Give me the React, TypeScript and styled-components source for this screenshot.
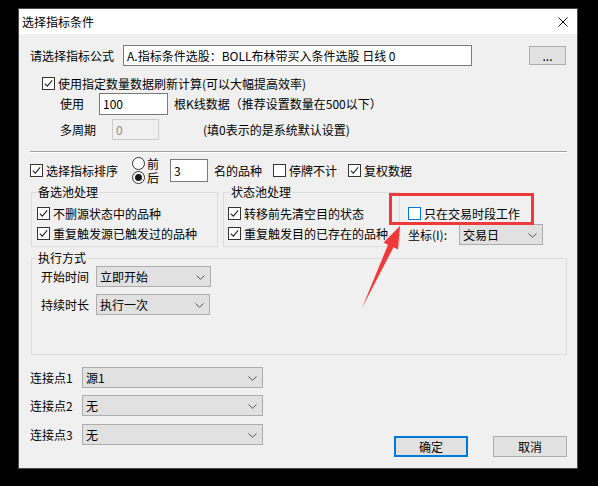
import React from 'react';
import styled, { createGlobalStyle } from 'styled-components';

const Global = createGlobalStyle`
  html, body { margin: 0; padding: 0; background: #000; }
  body {
    font-family: "Noto Sans CJK SC", "Microsoft YaHei", sans-serif;
    font-size: 12px;
    line-height: 16px;
    color: #000;
  }
  #root { width: 598px; height: 486px; overflow: hidden; padding-top: 8px; box-sizing: border-box; }
`;

const Dialog = styled.div`
  position: relative;
  margin-left: 18px;
  width: 560px;
  height: 461px;
  box-sizing: border-box;
  border: 1px solid #4a4a4a;
  background: #f0f0f0;
  display: flex;
  flex-direction: column;
`;

const TitleBar = styled.div`
  height: 25px;
  background: #fff;
  display: flex;
  align-items: center;
  justify-content: space-between;
  padding: 0 9px 0 3px;
  flex-shrink: 0;
`;

const Title = styled.span`
  font-size: 12px;
`;

const Content = styled.div`
  display: flex;
  flex-direction: column;
  padding: 0 10px 0 11px;
`;

const Row = styled.div<{ $mt?: number; $ml?: number; $h?: number }>`
  display: flex;
  align-items: center;
  margin-top: ${p => p.$mt ?? 0}px;
  margin-left: ${p => p.$ml ?? 0}px;
  height: ${p => (p.$h ? `${p.$h}px` : 'auto')};
  flex-shrink: 0;
`;

const Label = styled.span<{ $w?: number; $ml?: number }>`
  display: inline-block;
  width: ${p => (p.$w ? `${p.$w}px` : 'auto')};
  margin-left: ${p => p.$ml ?? 0}px;
  white-space: nowrap;
  flex-shrink: 0;
`;

const TextBox = styled.div<{ $w: number; $h: number; $disabled?: boolean; $ml?: number }>`
  width: ${p => p.$w}px;
  height: ${p => p.$h}px;
  margin-left: ${p => p.$ml ?? 0}px;
  box-sizing: border-box;
  border: 1px solid ${p => (p.$disabled ? '#cccccc' : '#7a7a7a')};
  background: ${p => (p.$disabled ? '#f0f0f0' : '#fff')};
  color: ${p => (p.$disabled ? '#8a8a8a' : '#000')};
  padding-left: 3px;
  display: flex;
  align-items: center;
  white-space: nowrap;
  overflow: hidden;
  flex-shrink: 0;
`;

const PushButton = styled.div<{ $w: number; $h: number; $primary?: boolean; $ml?: number }>`
  width: ${p => p.$w}px;
  height: ${p => p.$h}px;
  margin-left: ${p => p.$ml ?? 0}px;
  box-sizing: border-box;
  border: ${p => (p.$primary ? '2px solid #0078d7' : '1px solid #adadad')};
  background: #e1e1e1;
  display: flex;
  align-items: center;
  justify-content: center;
  flex-shrink: 0;
`;

const Separator = styled.div`
  margin-top: 11px;
  height: 1px;
  background: #a0a0a0;
  border-bottom: 1px solid #ffffff;
  flex-shrink: 0;
`;

const CheckRow = styled.div<{ $ml?: number; $mt?: number }>`
  display: flex;
  align-items: center;
  height: 13px;
  line-height: 13px;
  margin-left: ${p => p.$ml ?? 0}px;
  margin-top: ${p => p.$mt ?? 0}px;
  flex-shrink: 0;
  white-space: nowrap;
`;

const Box = styled.span<{ $focus?: boolean }>`
  width: 13px;
  height: 13px;
  box-sizing: border-box;
  border: 1px solid ${p => (p.$focus ? '#0078d7' : '#333333')};
  background: #fff;
  display: inline-flex;
  align-items: center;
  justify-content: center;
  margin-right: 3px;
  flex-shrink: 0;
`;

const RadioCol = styled.div`
  display: flex;
  flex-direction: column;
  gap: 1px;
  margin-left: 14px;
`;

const RadioRow = styled.div`
  display: flex;
  align-items: center;
  height: 13px;
  line-height: 13px;
`;

const Circle = styled.span`
  width: 13px;
  height: 13px;
  box-sizing: border-box;
  border: 1px solid #333;
  border-radius: 50%;
  background: #fff;
  display: inline-flex;
  align-items: center;
  justify-content: center;
  margin-right: 2px;
`;

const Dot = styled.span`
  width: 7px;
  height: 7px;
  border-radius: 50%;
  background: #1a1a1a;
`;

const Group = styled.fieldset<{ $w: number; $ml?: number; $pad: string }>`
  width: ${p => p.$w}px;
  margin: 0 0 0 ${p => p.$ml ?? 0}px;
  box-sizing: border-box;
  border: 1px solid #dcdcdc;
  padding: ${p => p.$pad};
  min-width: 0;
  display: flex;
  flex-direction: column;
  flex-shrink: 0;
`;

const Legend = styled.legend<{ $ml?: number }>`
  padding: 0 1px;
  margin-left: ${p => p.$ml ?? 0}px;
  line-height: 16px;
  height: 16px;
`;

const GroupsRow = styled.div`
  display: flex;
  align-items: flex-start;
`;

const SideCol = styled.div`
  display: flex;
  flex-direction: column;
  margin-left: 8px;
  padding-top: 23px;
`;

const SelectBox = styled.div<{ $w: number }>`
  position: relative;
  width: ${p => p.$w}px;
  height: 21px;
  box-sizing: border-box;
  border: 1px solid #adadad;
  background: #e1e1e1;
  padding-left: 3px;
  display: flex;
  align-items: center;
  flex-shrink: 0;
  white-space: nowrap;
`;

const Chevron = styled.svg`
  position: absolute;
  right: 5px;
  top: 8px;
`;

const BottomArea = styled.div`
  display: flex;
  justify-content: space-between;
  margin-top: 12px;
`;

const LinkCol = styled.div`
  display: flex;
  flex-direction: column;
`;

const ButtonRow = styled.div`
  display: flex;
  padding-top: 69px;
`;

const Annotation = styled.div`
  position: absolute;
  left: 370px;
  top: 184px;
  width: 145px;
  height: 32px;
  box-sizing: border-box;
  border: 3px solid #ee3a3a;
  pointer-events: none;
`;

const ArrowSvg = styled.svg`
  position: absolute;
  left: 321px;
  top: 201px;
  pointer-events: none;
`;

const CheckMark = () => (
  <svg width="11" height="11" viewBox="0 0 11 11">
    <polyline points="1.8,5.6 4.3,8.2 9.2,2.4" fill="none" stroke="#222" strokeWidth="1.1" />
  </svg>
);

const Check: React.FC<{ checked?: boolean; focus?: boolean; label: string; ml?: number; mt?: number }> = ({
  checked,
  focus,
  label,
  ml,
  mt,
}) => (
  <CheckRow $ml={ml} $mt={mt}>
    <Box $focus={focus}>{checked && <CheckMark />}</Box>
    <span>{label}</span>
  </CheckRow>
);

const Select: React.FC<{ w: number; value: string }> = ({ w, value }) => (
  <SelectBox $w={w}>
    <span>{value}</span>
    <Chevron width="9" height="5" viewBox="0 0 9 5">
      <polyline points="0.5,0.5 4.5,4.3 8.5,0.5" fill="none" stroke="#555" strokeWidth="1" />
    </Chevron>
  </SelectBox>
);

export default function App() {
  return (
    <>
      <Global />
      <Dialog>
        <TitleBar>
          <Title>选择指标条件</Title>
          <svg width="10" height="10" viewBox="0 0 10 10">
            <line x1="0.5" y1="0.5" x2="9.5" y2="9.5" stroke="#111" strokeWidth="1" />
            <line x1="9.5" y1="0.5" x2="0.5" y2="9.5" stroke="#111" strokeWidth="1" />
          </svg>
        </TitleBar>
        <Content>
          <Row $mt={11} $h={21}>
            <Label $w={93}>请选择指标公式</Label>
            <TextBox $w={349} $h={21}>A.指标条件选股：BOLL布林带买入条件选股 日线 0</TextBox>
            <PushButton $w={37} $h={19} $ml={57}>...</PushButton>
          </Row>
          <Row $mt={11} $h={13}>
            <Check checked ml={12} label="使用指定数量数据刷新计算(可以大幅提高效率)" />
          </Row>
          <Row $mt={3} $h={22} $ml={30}>
            <Label $w={39}>使用</Label>
            <TextBox $w={69} $h={22}>100</TextBox>
            <Label $ml={6}>根K线数据（推荐设置数量在500以下）</Label>
          </Row>
          <Row $mt={4} $h={21} $ml={30}>
            <Label $w={52}>多周期</Label>
            <TextBox $w={47} $h={21} $disabled>0</TextBox>
            <Label $ml={44}>(填0表示的是系统默认设置)</Label>
          </Row>
          <Separator />
          <Row $mt={4} $h={27}>
            <Check checked label="选择指标排序" />
            <RadioCol>
              <RadioRow>
                <Circle />
                <span>前</span>
              </RadioRow>
              <RadioRow>
                <Circle>
                  <Dot />
                </Circle>
                <span>后</span>
              </RadioRow>
            </RadioCol>
            <TextBox $w={38} $h={23} $ml={11}>3</TextBox>
            <Label $ml={6}>名的品种</Label>
            <Check ml={11} label="停牌不计" />
            <Check checked ml={11} label="复权数据" />
          </Row>
          <GroupsRow>
            <Group $w={187} $ml={1} $pad="7px 4px 6px 5px">
              <Legend>备选池处理</Legend>
              <Check checked label="不删源状态中的品种" />
              <Check checked mt={7} label="重复触发源已触发过的品种" />
            </Group>
            <Group $w={177} $ml={5} $pad="7px 4px 6px 4px">
              <Legend $ml={2}>状态池处理</Legend>
              <Check checked label="转移前先清空目的状态" />
              <Check checked mt={7} label="重复触发目的已存在的品种" />
            </Group>
            <SideCol>
              <Check focus label="只在交易时段工作" />
              <Row $mt={4} $h={21}>
                <Label $w={51}>坐标(I):</Label>
                <Select w={84} value="交易日" />
              </Row>
            </SideCol>
          </GroupsRow>
          <Row $mt={3}>
            <Group $w={536} $ml={1} $pad="0 4px 39px 5px">
              <Legend>执行方式</Legend>
              <Row $h={21} $ml={4}>
                <Label $w={55}>开始时间</Label>
                <Select w={115} value="立即开始" />
              </Row>
              <Row $mt={7} $h={21} $ml={4}>
                <Label $w={55}>持续时长</Label>
                <Select w={114} value="执行一次" />
              </Row>
            </Group>
          </Row>
          <BottomArea>
            <LinkCol>
              <Row $h={21}>
                <Label $w={52}>连接点1</Label>
                <Select w={181} value="源1" />
              </Row>
              <Row $mt={7} $h={21}>
                <Label $w={52}>连接点2</Label>
                <Select w={181} value="无" />
              </Row>
              <Row $mt={8} $h={21}>
                <Label $w={52}>连接点3</Label>
                <Select w={181} value="无" />
              </Row>
            </LinkCol>
            <ButtonRow>
              <PushButton $w={74} $h={21} $primary>确定</PushButton>
              <PushButton $w={74} $h={21} $ml={25}>取消</PushButton>
            </ButtonRow>
          </BottomArea>
        </Content>
        <Annotation />
        <ArrowSvg width="80" height="120" viewBox="0 0 80 120">
          <polygon points="22,98 48,34.7 43.5,32.6 60,16 58,39.4 53.5,37.3" fill="#ee3a3a" />
        </ArrowSvg>
      </Dialog>
    </>
  );
}
